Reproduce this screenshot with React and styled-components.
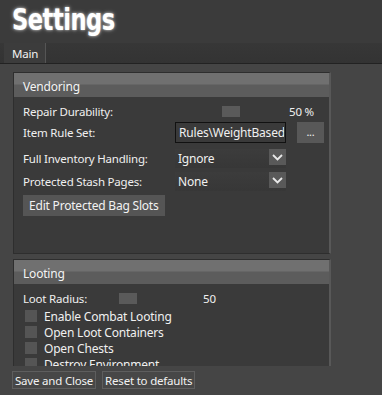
import React from "react";
import styled, { createGlobalStyle } from "styled-components";

const Global = createGlobalStyle`
  html, body {
    margin: 0;
    padding: 0;
    background: #454545;
  }
  body {
    font-family: "Noto Sans", "Open Sans", sans-serif;
    font-size: 11.5px;
    letter-spacing: -0.2px;
    color: #f0f0f0;
  }
`;

const Page = styled.div`
  width: 382px;
  height: 395px;
  overflow: hidden;
  display: flex;
  flex-direction: column;
  background: #454545;
`;

const Header = styled.div`
  height: 43px;
  background: #3b3b3b;
  padding-left: 12px;
  box-sizing: border-box;
  display: flex;
  align-items: flex-start;
`;

const Title = styled.h1`
  margin: 0;
  margin-top: 1px;
  font-family: "DejaVu Sans Condensed", "DejaVu Sans", sans-serif;
  font-weight: bold;
  font-size: 31px;
  line-height: 36px;
  letter-spacing: -0.6px;
  color: #ffffff;
  transform: scaleX(0.81);
  transform-origin: left center;
  text-shadow: 0 0 3px rgba(255, 255, 255, 0.7), 0 0 6px rgba(255, 255, 255, 0.35);
`;

const TabStrip = styled.div`
  height: 20px;
  background: linear-gradient(#373737, #333333);
  border-bottom: 1px solid #222;
  display: flex;
  padding-left: 4px;
`;

const Tab = styled.div`
  height: 20px;
  padding: 0 7px 0 8px;
  display: flex;
  align-items: center;
  background: #3c3c3c;
  border-right: 1px solid #555;
  color: #f2f2f2;
`;

const Body = styled.div`
  flex: 1;
  display: flex;
  flex-direction: column;
  padding-top: 8px;
`;

const ScrollArea = styled.div`
  width: 318px;
  height: 294px;
  margin-left: 13px;
  overflow: hidden;
  display: flex;
  flex-direction: column;
  gap: 5px;
`;

const Group = styled.div`
  border: 1px solid #2e2e2e;
  border-right: 2px solid #585858;
  flex-shrink: 0;
  background: #3a3a3a;
`;

const GroupHeader = styled.div`
  height: 24px;
  padding-left: 9px;
  display: flex;
  align-items: center;
  padding-top: 2px;
  box-sizing: border-box;
  background: linear-gradient(#707070 0, #707070 11px, #5c5c5c 12px, #5c5c5c 100%);
  font-size: 12px;
  color: #f4f4f4;
`;

const GroupContent = styled.div`
  height: ${p => p.height}px;
  padding: 6px 0 0 9px;
  box-sizing: border-box;
  display: flex;
  flex-direction: column;
`;

const Row = styled.div`
  display: grid;
  grid-template-columns: ${p => p.cols};
  align-items: center;
  height: ${p => p.h}px;
  margin-top: ${p => p.mt || 0}px;
`;

const Label = styled.span`
  white-space: nowrap;
`;

const SliderTrack = styled.div`
  position: relative;
  height: 12px;
`;

const Thumb = styled.div`
  position: absolute;
  top: 1px;
  width: 18px;
  height: 11px;
  margin-left: -9px;
  background: #5a5a5a;
`;

const Value = styled.span`
  margin-left: ${p => p.ml}px;
  white-space: nowrap;
`;

const TextBox = styled.div`
  width: 111px;
  height: 21px;
  box-sizing: border-box;
  border: 1px solid #111;
  background: #3a3a3a;
  padding-left: 3px;
  display: flex;
  align-items: center;
  overflow: hidden;
  font-size: 12px;
`;

const Clip = styled.span`
  display: block;
  width: 105px;
  overflow: hidden;
  white-space: nowrap;
`;

const SmallButton = styled.div`
  width: 27px;
  height: 21px;
  margin-left: 6px;
  background: #585858;
  display: flex;
  align-items: center;
  justify-content: center;
  padding-bottom: 2px;
  box-sizing: border-box;
  font-size: 11px;
`;

const Combo = styled.div`
  width: 111px;
  height: 19px;
  display: flex;
  align-items: center;
  justify-content: space-between;
  background: linear-gradient(#3c3c3c, #373737);
  padding-left: 3px;
  box-sizing: border-box;
  font-size: 12px;
`;

const ComboArrow = styled.div`
  width: 17px;
  height: 16px;
  align-self: flex-start;
  background: #595959;
  display: flex;
  align-items: center;
  justify-content: center;
`;

const Button = styled.div`
  display: inline-flex;
  align-items: center;
  padding: 0 ${p => p.px || 7}px;
  height: ${p => p.h || 21}px;
  background: ${p => p.bg || "#555"};
  border: ${p => p.border || "none"};
  color: #f2f2f2;
  white-space: nowrap;
  box-sizing: border-box;
  font-size: ${p => p.fs || 12}px;
`;

const CheckRow = styled.div`
  display: flex;
  align-items: center;
  height: 16px;
  padding-left: 2px;
  gap: 7px;
  white-space: nowrap;
  font-size: 12px;
`;

const Box = styled.div`
  width: 12px;
  height: 12px;
  background: #555;
  flex-shrink: 0;
`;

const Footer = styled.div`
  display: flex;
  gap: 6px;
  padding: 5px 0 0 12px;
`;

const Chevron = () => (
  <svg width="11" height="7" viewBox="0 0 11 7">
    <path d="M1 1 L5.5 5.5 L10 1" fill="none" stroke="#e8e8e8" strokeWidth="1.8" />
  </svg>
);

const Slider = ({ pos }) => (
  <SliderTrack>
    <Thumb style={{ left: `${pos}%` }} />
  </SliderTrack>
);

const ComboBox = ({ value }) => (
  <Combo>
    <span>{value}</span>
    <ComboArrow>
      <Chevron />
    </ComboArrow>
  </Combo>
);

export default function App() {
  return (
    <Page>
      <Global />
      <Header>
        <Title>Settings</Title>
      </Header>
      <TabStrip>
        <Tab>Main</Tab>
      </TabStrip>
      <Body>
        <ScrollArea>
          <Group>
            <GroupHeader>Vendoring</GroupHeader>
            <GroupContent height={156}>
              <Row cols="152px 111px auto" h={16}>
                <Label>Repair Durability:</Label>
                <Slider pos={50} />
                <Value ml={3}>50 %</Value>
              </Row>
              <Row cols="152px auto auto" h={21} mt={3}>
                <Label>Item Rule Set:</Label>
                <TextBox>
                  <Clip>Rules\WeightBasedF</Clip>
                </TextBox>
                <SmallButton>...</SmallButton>
              </Row>
              <Row cols="152px auto" h={19} mt={6}>
                <Label>Full Inventory Handling:</Label>
                <ComboBox value="Ignore" />
              </Row>
              <Row cols="152px auto" h={19} mt={4}>
                <Label>Protected Stash Pages:</Label>
                <ComboBox value="None" />
              </Row>
              <Row cols="auto" h={21} mt={4}>
                <div>
                  <Button px={6}>Edit Protected Bag Slots</Button>
                </div>
              </Row>
            </GroupContent>
          </Group>
          <Group>
            <GroupHeader>Looting</GroupHeader>
            <GroupContent height={120}>
              <Row cols="67px 75px auto" h={16}>
                <Label>Loot Radius:</Label>
                <Slider pos={50} />
                <Value ml={38}>50</Value>
              </Row>
              <div style={{ height: 2 }} />
              <CheckRow><Box />Enable Combat Looting</CheckRow>
              <CheckRow><Box />Open Loot Containers</CheckRow>
              <CheckRow><Box />Open Chests</CheckRow>
              <CheckRow><Box />Destroy Environment</CheckRow>
            </GroupContent>
          </Group>
        </ScrollArea>
        <Footer>
          <Button h={18} px={2} fs={11.5} bg="#474747" border="1px solid #5e5e5e">Save and Close</Button>
          <Button h={18} px={2} fs={11.5} bg="#474747" border="1px solid #5e5e5e">Reset to defaults</Button>
        </Footer>
      </Body>
    </Page>
  );
}
